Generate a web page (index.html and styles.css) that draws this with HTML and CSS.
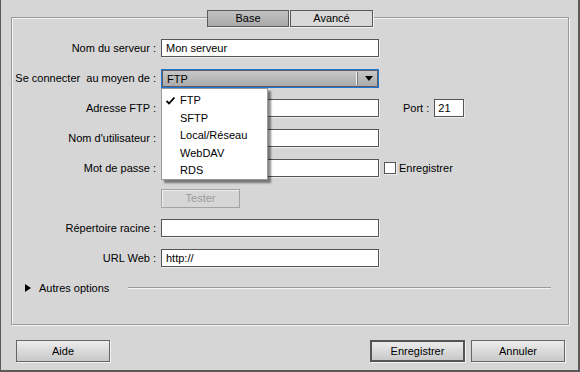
FILE: index.html
```html
<!DOCTYPE html>
<html lang="fr">

<head>
  <meta charset="UTF-8" />
  <title>Définition du site - Serveur</title>
  <link rel="stylesheet" href="styles.css">
</head>

<body>
  <div class="window">
    <!-- Tabs -->
    <div class="tabs">
      <div class="tab active">Base</div>
      <div class="tab">Avancé</div>
    </div>

    <!-- Main group box -->
    <div class="panel">
      <div class="row">
        <label class="lbl">Nom du serveur :</label>
        <div class="field">Mon serveur</div>
      </div>

      <div class="row">
        <label class="lbl">Se connecter&nbsp; au moyen de :</label>
        <div class="select">
          <span class="select-value">FTP</span>
          <span class="select-sep"></span>
          <span class="select-arrow"></span>
        </div>
      </div>

      <div class="row">
        <label class="lbl">Adresse FTP :</label>
        <div class="field"></div>
        <label class="port-lbl">Port :</label>
        <div class="field port">21</div>
      </div>

      <div class="row">
        <label class="lbl">Nom d'utilisateur :</label>
        <div class="field"></div>
      </div>

      <div class="row">
        <label class="lbl">Mot de passe :</label>
        <div class="field"></div>
        <span class="checkbox"></span>
        <span class="check-lbl">Enregistrer</span>
      </div>

      <div class="row">
        <span class="lbl"></span>
        <div class="btn disabled">Tester</div>
      </div>

      <div class="row">
        <label class="lbl">Répertoire racine :</label>
        <div class="field"></div>
      </div>

      <div class="row">
        <label class="lbl">URL Web :</label>
        <div class="field">http://</div>
      </div>

      <div class="more">
        <svg class="more-arrow" width="6" height="8" viewBox="0 0 6 8"><path d="M0 0 L6 4 L0 8 Z" fill="#000"/></svg>
        <span>Autres options</span>
        <span class="more-line"></span>
      </div>

      <!-- Open dropdown list of the connection select -->
      <ul class="menu">
        <li class="checked">
          <svg class="tick" width="9" height="8" viewBox="0 0 9 8"><path d="M0.5 4 L3 6.5 L8.5 0.5" fill="none" stroke="#000" stroke-width="1.8"/></svg>
          FTP
        </li>
        <li>SFTP</li>
        <li>Local/Réseau</li>
        <li>WebDAV</li>
        <li>RDS</li>
      </ul>
    </div>

    <!-- Dialog buttons -->
    <div class="actions">
      <div class="btn wide">Aide</div>
      <div class="spacer"></div>
      <div class="btn wide default">Enregistrer</div>
      <div class="btn wide">Annuler</div>
    </div>
  </div>
</body>

</html>
```

FILE: styles.css
```css
* {
  box-sizing: border-box;
}

body {
  margin: 0;
  font-family: 'Liberation Sans', Arial, sans-serif;
  font-size: 11px;
  color: #000;
  background: #d6d6d6;
}

.window {
  width: 580px;
  height: 372px;
  background: #d6d6d6;
  border-left: 1px solid #5a5a5a;
  border-right: 2px solid #5a5a5a;
  border-bottom: 2px solid #5a5a5a;
  padding: 10px 9px 0 10px;
}

/* tabs */
.tabs {
  display: flex;
  padding-left: 196px;
  position: relative;
  z-index: 1;
}

.tab {
  width: 83px;
  height: 17px;
  line-height: 15px;
  text-align: center;
  border: 1px solid #5a5a5a;
  background: #d9d9d9;
  box-shadow: 1px 1px 0 #f2f2f2;
}

.tab.active {
  width: 82px;
  margin-right: 1px;
  background: linear-gradient(#c2c2c2, #a9a9a9);
}

/* group box */
.panel {
  position: relative;
  height: 308px;
  margin-top: -10px;
  border: 1px solid #999;
  box-shadow: 1px 1px 0 #f4f4f4, inset 1px 1px 0 #f4f4f4;
  padding-top: 21px;
}

.row {
  display: flex;
  align-items: center;
  height: 18px;
  margin-bottom: 12px;
}

.lbl {
  width: 144px;
  margin-right: 5px;
  text-align: right;
  white-space: nowrap;
}

.field {
  width: 218px;
  height: 18px;
  line-height: 16px;
  padding-left: 4px;
  background: #fff;
  border: 1px solid #555;
  box-shadow: 1px 1px 0 #eee;
}

.field.port {
  width: 30px;
  padding-left: 3px;
}

.port-lbl {
  margin-left: 24px;
  margin-right: 5px;
}

.checkbox {
  width: 12px;
  height: 12px;
  margin-left: 5px;
  margin-right: 3px;
  background: #fff;
  border: 1px solid #555;
  box-shadow: 1px 1px 0 #eee;
}

/* select */
.select {
  display: flex;
  align-items: center;
  width: 218px;
  height: 19px;
  margin-top: 1px;
  border: 1px solid #1f74d4;
  box-shadow: inset 0 0 0 1px #5e5e5e;
  background: linear-gradient(#c9c9c9, #a9a9a9);
}

.select-value {
  flex: 1;
  padding-left: 5px;
}

.select-sep {
  width: 2px;
  height: 13px;
  border-left: 1px solid #f2f2f2;
  border-right: 1px solid #7a7a7a;
  margin-right: 7px;
}

.select-arrow {
  width: 0;
  height: 0;
  margin-right: 5px;
  border-left: 4px solid transparent;
  border-right: 4px solid transparent;
  border-top: 5px solid #000;
}

/* dropdown list */
.menu {
  position: absolute;
  left: 149px;
  top: 70px;
  width: 107px;
  height: 92px;
  margin: 0;
  padding: 3px 0 0 0;
  list-style: none;
  background: #fff;
  border: 1px solid #9a9a9a;
  box-shadow: 3px 3px 2px rgba(0, 0, 0, 0.45);
  z-index: 2;
}

.menu li {
  position: relative;
  height: 17.5px;
  line-height: 17px;
  padding-left: 18px;
}

.menu .tick {
  position: absolute;
  left: 4px;
  top: 5px;
}

/* buttons */
.btn {
  height: 19px;
  line-height: 17px;
  text-align: center;
  border: 1px solid #666;
  background: linear-gradient(#ececec, #c8c8c8);
  box-shadow: 1px 1px 0 #f2f2f2;
}

.btn.disabled {
  width: 79px;
  color: #9a9a9a;
  border-color: #a3a3a3;
  background: #d6d6d6;
  box-shadow: inset 1px 1px 0 #eee;
}

.btn.wide {
  width: 94px;
  height: 22px;
  line-height: 20px;
}

.btn.default {
  border: 2px solid #555;
  line-height: 18px;
  width: 95px;
  margin-right: 6px;
}

/* other options */
.more {
  display: flex;
  align-items: center;
  height: 14px;
  padding-left: 13px;
  margin-top: 14px;
}

.more-arrow {
  margin-right: 8px;
}

.more-line {
  flex: 1;
  height: 2px;
  margin-left: 19px;
  margin-right: 17px;
  border-top: 1px solid #999;
  border-bottom: 1px solid #f4f4f4;
}

.actions {
  display: flex;
  margin-top: 15px;
  padding-left: 5px;
  padding-right: 4px;
}

.spacer {
  flex: 1;
}
```
